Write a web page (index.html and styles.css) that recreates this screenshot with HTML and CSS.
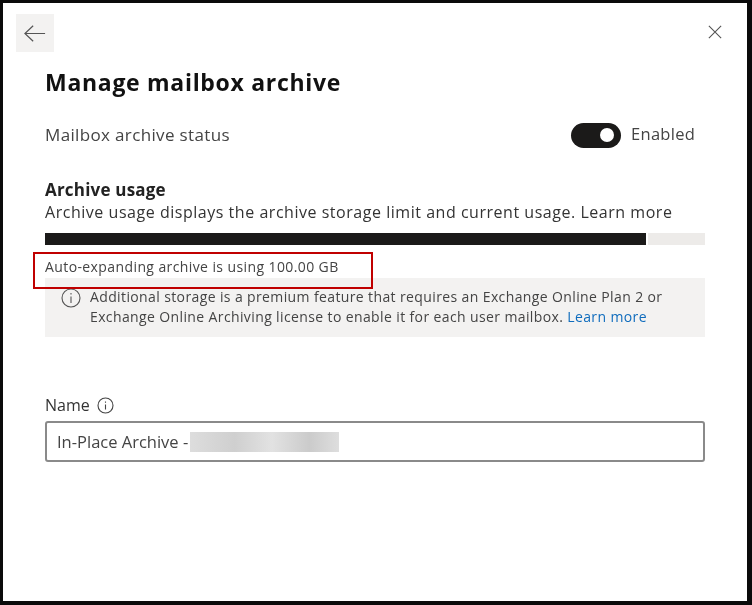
FILE: index.html
```html
<!DOCTYPE html>
<html lang="en">
<head>
<meta charset="utf-8">
<title>Manage mailbox archive</title>
<link rel="stylesheet" href="styles.css">
</head>
<body>
<div class="frame">
  <div class="topbar">
    <div class="back">
      <svg width="22" height="19" viewBox="0 0 24 20" fill="none" stroke="#555" stroke-width="1.3"><path d="M1 10H23M10 1.5L1 10L10 18.5"/></svg>
    </div>
    <svg class="close" width="14" height="14" viewBox="0 0 16 16" fill="none" stroke="#555" stroke-width="1.3"><path d="M1 1L15 15M15 1L1 15"/></svg>
  </div>
  <main class="content">
    <h1 class="title">Manage mailbox archive</h1>
    <div class="status-row">
      <span class="status-label">Mailbox archive status</span>
      <div class="toggle-group">
        <span class="toggle"><span class="knob"></span></span>
        <span class="toggle-text">Enabled</span>
      </div>
    </div>
    <h2 class="usage-title">Archive usage</h2>
    <p class="usage-desc">Archive usage displays the archive storage limit and current usage. Learn more</p>
    <div class="bar"><div class="bar-fill"></div></div>
    <div class="using">Auto-expanding archive is using 100.00 GB</div>
    <div class="notice">
      <svg class="notice-icon" width="20" height="20" viewBox="0 0 20 20" fill="none" stroke="#555" stroke-width="1.1"><circle cx="10" cy="10" r="9"/><path d="M10 8.5V15M10 5V6.6"/></svg>
      <p class="notice-text">Additional storage is a premium feature that requires an Exchange Online Plan 2 or Exchange Online Archiving license to enable it for each user mailbox. <span class="link">Learn more</span></p>
    </div>
    <div class="name-label">
      <span>Name</span>
      <svg width="17" height="17" viewBox="0 0 17 17" fill="none" stroke="#444" stroke-width="1.1"><circle cx="8.5" cy="8.5" r="7.5"/><path d="M8.5 7.5V12.5M8.5 4.4V5.8"/></svg>
    </div>
    <div class="input">
      <span>In-Place Archive -</span>
      <span class="redacted"></span>
    </div>
  </main>
  <div class="annotation"></div>
</div>
</body>
</html>
```
FILE: styles.css
```css
* { box-sizing: border-box; }
html, body { margin: 0; padding: 0; background: #000; }
body { width: 752px; height: 605px; overflow: hidden; font-family: "Open Sans", "Noto Sans", sans-serif; color: #323130; }
.frame { position: relative; width: 752px; height: 605px; background: #fff; border: solid #0a0a0a; border-width: 3px 5px 4px 3px; display: flex; flex-direction: column; }
.topbar { display: flex; justify-content: space-between; align-items: flex-start; padding: 11px 25px 0 13px; filter: blur(0.3px); }
.back { width: 38px; height: 38px; background: #f3f2f1; display: flex; align-items: center; justify-content: center; }
.close { margin-top: 11px; }
.content { padding: 0 42px 0 42px; display: flex; flex-direction: column; filter: blur(0.35px); }
.title { margin: 15px 0 0; font-size: 23px; line-height: 30px; font-weight: 700; color: #111; letter-spacing: 0.7px; }
.status-row { display: flex; justify-content: space-between; align-items: center; margin-top: 25px; height: 26px; }
.status-label { font-size: 17px; letter-spacing: 0.35px; color: #444; padding-bottom: 1px; }
.toggle-group { display: flex; align-items: center; gap: 10px; }
.toggle { width: 50px; height: 25px; border-radius: 13px; background: #1b1a19; display: flex; align-items: center; justify-content: flex-end; padding-right: 7px; }
.knob { width: 14px; height: 14px; border-radius: 50%; background: #fff; }
.toggle-text { font-size: 16.5px; color: #444; width: 74px; letter-spacing: 0.3px; padding-bottom: 3px; }
.usage-title { margin: 31px 0 0; font-size: 17px; line-height: 22px; font-weight: 700; color: #222; letter-spacing: 0.2px; }
.usage-desc { margin: 0; font-size: 16px; line-height: 22px; color: #333; letter-spacing: 0.53px; }
.bar { margin-top: 10px; height: 12px; background: #edebe9; }
.bar-fill { width: 603px; height: 12px; background: #1b1a19; border-right: 2px solid #fff; }
.using { margin-top: 12px; font-size: 14px; line-height: 20px; color: #444; height: 21px; letter-spacing: 0.4px; }
.notice { background: #f3f2f1; height: 59px; display: flex; align-items: flex-start; gap: 9px; padding: 9px 16px 0 16px; }
.notice-icon { flex: none; margin-top: 1px; }
.notice-text { margin: 0; font-size: 14px; line-height: 20px; color: #444; letter-spacing: 0.38px; }
.link { color: #0f6cbd; }
.name-label { margin-top: 56px; display: flex; align-items: center; gap: 7px; font-size: 16px; line-height: 24px; color: #333; height: 24px; }
.input { margin-top: 4px; height: 41px; border: 2px solid #8a8a8a; border-radius: 3px; display: flex; align-items: center; padding-left: 10px; font-size: 16.5px; color: #444; gap: 2px; }
.redacted { width: 149px; height: 20px; background: linear-gradient(90deg, #ddd, #cfcfcf 30%, #e2e2e2 55%, #cbcbcb 80%, #dedede); }
.annotation { position: absolute; left: 30px; top: 249px; width: 340px; height: 37px; border: 2px solid #c00000; }
```
